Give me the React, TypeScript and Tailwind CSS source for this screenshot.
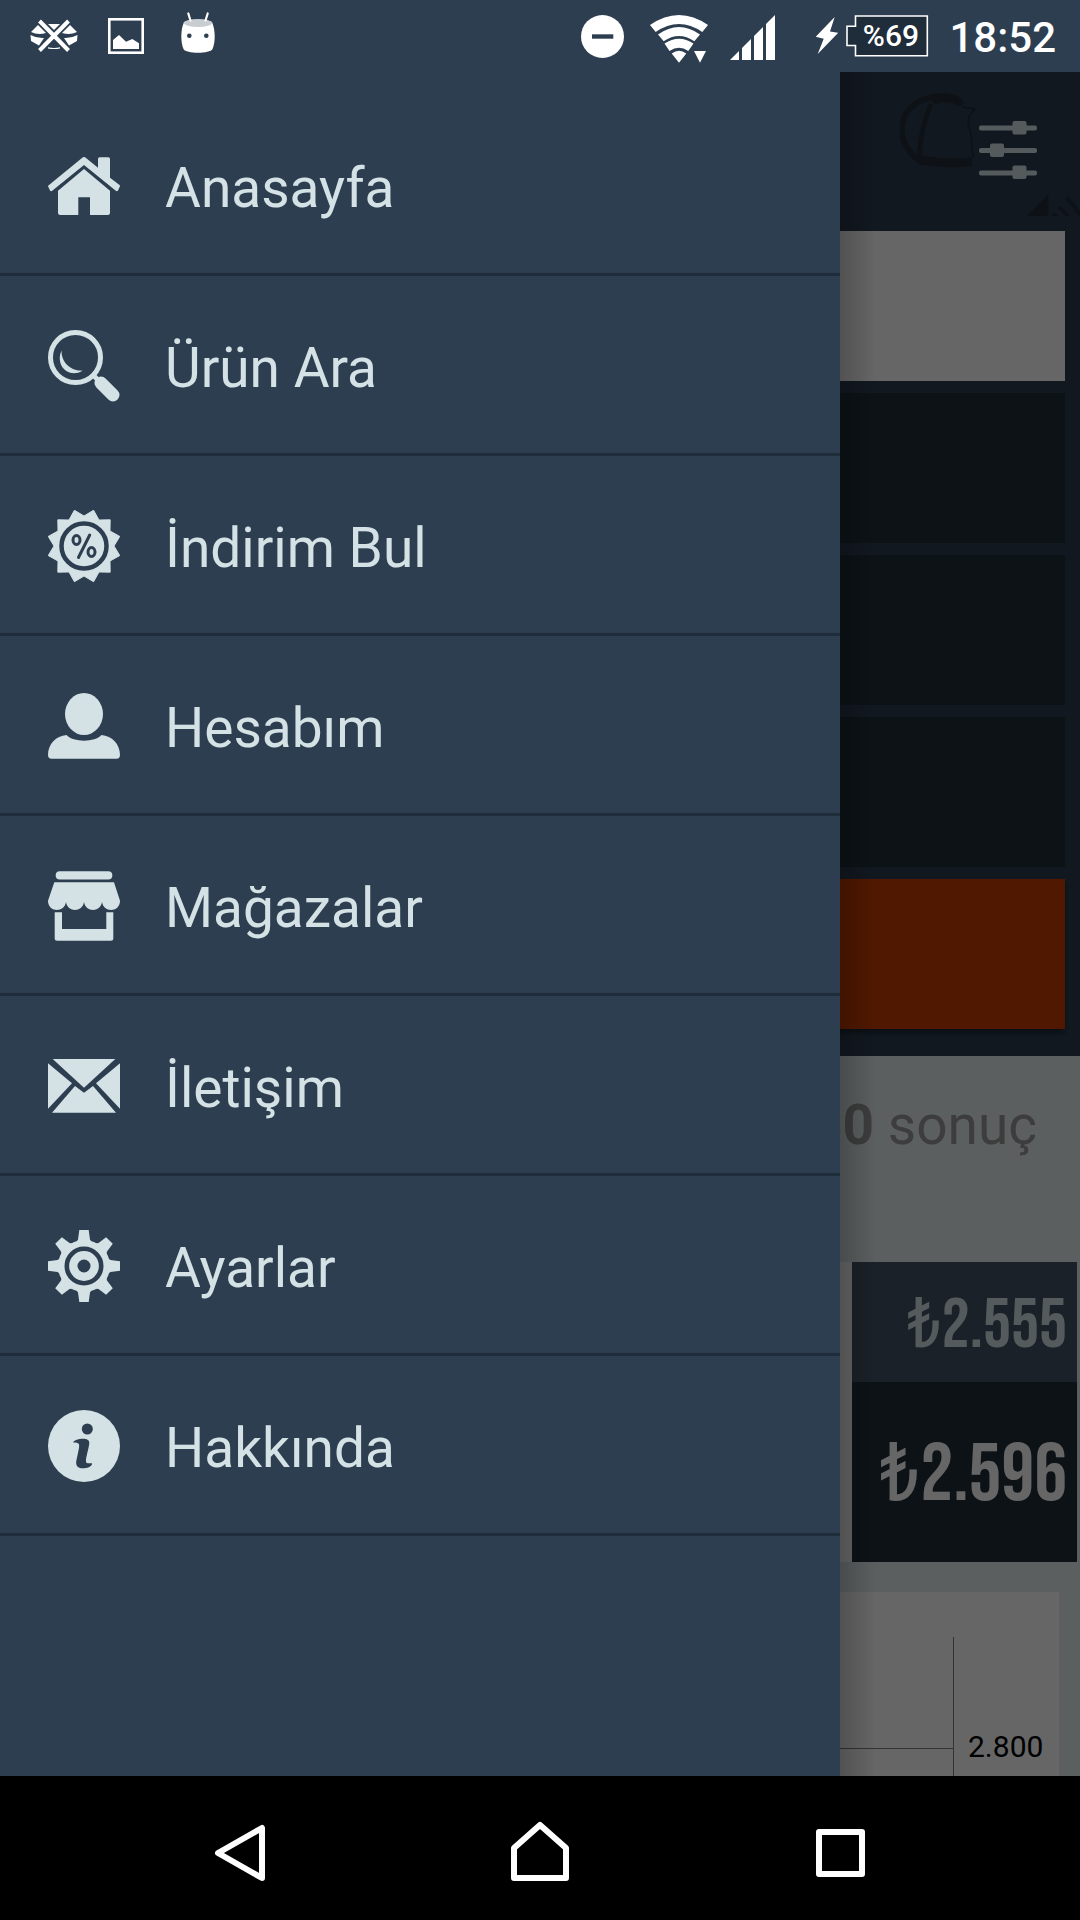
import React from 'react';

const starPoints = Array.from({ length: 24 }, (_, i) => {
    const angle = (i * Math.PI) / 12;
    const radius = i % 2 === 0 ? 30 : 37;
    return `${36 + radius * Math.sin(angle)},${36 - radius * Math.cos(angle)}`;
}).join(' ');

const toothAngles = [0, 45, 90, 135, 180, 225, 270, 315];

function HomeIcon() {
    return (
        <>
            <path d="M1 35 34 8Q36 6 38 8L50 17.7V9Q50 7.300 51.700 7.300H60.300Q62 7.300 62 9V27.700L71.500 35Q72.500 36 71.500 37.200L70 40.500Q69 42 67.500 40.500L36 15 4.500 40.500Q3 42 2 40.500L.5 37.200Q-.5 36 1 35Z" />
            <path d="M36 19 62 40.700V62.500Q62 65 59.500 65H42V47.300H30.300V65H12.500Q10 65 10 62.500V40.700Z" />
        </>
    );
}

function SearchIcon() {
    return (
        <>
            <circle cx="27.5" cy="27.5" r="25" fill="none" stroke="currentColor" strokeWidth="5" />
            <path d="M13.500 20.500C7 35 20 49 34.800 40.700C24 41 13.500 34 13.500 20.500Z" />
            <path d="M44 44 50 50" stroke="currentColor" strokeWidth="5" />
            <path d="M53 53 65 65" stroke="currentColor" strokeWidth="13" strokeLinecap="round" />
        </>
    );
}

function DiscountIcon() {
    return (
        <>
            <polygon points={starPoints} stroke="currentColor" strokeWidth="1" strokeLinejoin="round" />
            <g fill="none" className="stroke-[#2d3e50]">
                <circle cx="36" cy="36" r="22.500" strokeWidth="4.500" />
                <ellipse cx="28.500" cy="30" rx="3.500" ry="4.500" strokeWidth="3" />
                <ellipse cx="43.500" cy="42" rx="3.500" ry="4.500" strokeWidth="3" />
                <path d="M41.700 25 30.500 47.500" strokeWidth="3" strokeLinecap="round" />
            </g>
        </>
    );
}

function UserIcon() {
    return (
        <>
            <ellipse cx="36" cy="24" rx="19" ry="21" />
            <path d="M18.500 45C25 52.500 47 52.500 53.500 45C64 46 72 54 72 65Q72 68.700 68.500 68.700H3.500Q0 68.700 0 65C0 54 8 46 18.500 45Z" />
        </>
    );
}

function StoreIcon() {
    return (
        <>
            <rect x="7.700" y="1.300" width="56.600" height="8.200" rx="4.100" />
            <path d="M6.300 12.300H66L72 30.700C72 42.500 55.500 43 54 32C52.500 42.500 37.500 42.500 36 32C34.500 42.500 19.500 42.500 18 32C16.500 43 0 42.500 0 30.700Z" />
            <path d="M6.700 42.300H14V59H58.300V42.300H65.300V68.200Q65.300 70.700 62.800 70.700H9.200Q6.700 70.700 6.700 68.200Z" />
        </>
    );
}

function MailIcon() {
    return (
        <>
            <path d="M4.700 9H67.300L36 37.700Z" />
            <path d="M0 13.300 24 33.300 0 58.700Z" />
            <path d="M72 13.300 48 33.300 72 58.700Z" />
            <path d="M27 36 36 42.700 45 36 68 62.700H4Z" />
        </>
    );
}

function GearIcon() {
    return (
        <>
            <circle cx="36" cy="36" r="26" />
            {toothAngles.map((angle) => (
                <path key={angle} d="M31.300 0H40.700L42 9.500 45 14H27L30 9.500Z" transform={`rotate(${angle} 36 36)`} />
            ))}
            <circle cx="36" cy="36" r="17.200" fill="none" strokeWidth="4.600" className="stroke-[#2d3e50]" />
            <circle cx="36" cy="36" r="6.500" className="fill-[#2d3e50]" />
        </>
    );
}

function InfoIcon() {
    return (
        <>
            <circle cx="36" cy="36" r="36" />
            <g className="fill-[#2d3e50]">
                <circle cx="39.300" cy="19" r="5.500" />
                <path d="M25.200 32.500Q25 31 28 30C34 28 41.500 28 41.300 33C41 38 37.500 48 38 51.500C38.400 54.500 42 52.500 44.200 53.500C43.500 57 39 58.300 35 58.300C29 58.300 27.700 55 28.300 51L31 38C31.500 34 31.500 32.500 25.200 32.500Z" />
            </g>
        </>
    );
}

const menuItems = [
    { label: 'Anasayfa', Icon: HomeIcon },
    { label: 'Ürün Ara', Icon: SearchIcon },
    { label: 'İndirim Bul', Icon: DiscountIcon },
    { label: 'Hesabım', Icon: UserIcon },
    { label: 'Mağazalar', Icon: StoreIcon },
    { label: 'İletişim', Icon: MailIcon },
    { label: 'Ayarlar', Icon: GearIcon },
    { label: 'Hakkında', Icon: InfoIcon },
];

function StatusBar() {
    return (
        <div className="flex h-[72px] items-center justify-between bg-[#2d3e50] pl-[30px] pr-6 text-white">
            <div className="flex items-center gap-[30px]">
                <svg viewBox="30 0 48 72" className="h-[72px] w-12" fill="currentColor">
                    <path d="M48 24H60L54 30Z" />
                    <path d="M31 32 38 25 46 33Q38 35.500 31 32Z" />
                    <path d="M77 32 70 25 62 33Q70 35.500 77 32Z" />
                    <path d="M30.500 35Q37 38.500 44 38L39 45.500 31 41Z" />
                    <path d="M77.500 35Q71 38.500 64 38L69 45.500 77 41Z" />
                    <path d="M48 47.300Q54 48.500 60 47.300V48.500Q54 49.500 48 48.500Z" />
                    <path d="M39.500 21 68.500 50.500M68.500 21 39.500 50.500" stroke="currentColor" strokeWidth="4" />
                </svg>
                <svg viewBox="108 0 36 72" className="h-[72px] w-9" fill="currentColor">
                    <rect x="109.300" y="19.300" width="33.400" height="33.400" fill="none" stroke="currentColor" strokeWidth="2.600" />
                    <path d="M113 49V40L119 35 126 41.700 132.300 39 139 43.300V49Z" />
                </svg>
                <svg viewBox="174 0 42 72" className="h-[72px] w-[42px]" fill="currentColor">
                    <path d="M184 22C190 19 206 19 212 22C215.500 30 215.500 42 212.500 49C210 54 186 54 183.500 49C180.500 42 180.500 30 184 22Z" />
                    <ellipse cx="198" cy="23" rx="14" ry="4" className="fill-[#c8cdd2]" />
                    <path d="M188.300 13.500 190.500 20.500M207.700 13.500 205.500 20.500" stroke="currentColor" strokeWidth="2.200" strokeLinecap="round" />
                    <circle cx="189.300" cy="35.700" r="2.300" className="fill-[#2d3e50]" />
                    <circle cx="206.300" cy="35.700" r="2.300" className="fill-[#2d3e50]" />
                </svg>
            </div>

            <div className="flex items-center gap-[22px]">
                <svg viewBox="581 0 47 72" className="h-[72px] w-[47px]" fill="currentColor">
                    <circle cx="602.500" cy="36.500" r="21.500" />
                    <rect x="592" y="34.300" width="21.300" height="4.400" className="fill-[#2d3e50]" />
                </svg>
                <svg viewBox="650 0 58 72" className="h-[72px] w-[58px]" fill="currentColor">
                    <path d="M650 25Q679 5 708 25L702.300 32Q679 16 655.700 32Z" />
                    <path d="M658 34.500Q679 19.500 700 34.500L694.300 41.300Q679 30.500 663.700 41.300Z" />
                    <path d="M664.500 43.500Q679 34 693.500 43.500L688.300 51Q679 44.500 669.500 51Z" />
                    <path d="M671.700 53.500Q679 48 686.300 53.500L679 62.700Z" />
                    <path d="M694 51H706L700 62.700Z" />
                </svg>
                <svg viewBox="730 0 45 72" className="h-[72px] w-[45px]" fill="currentColor">
                    <path d="M730 60 739 51V60Z" />
                    <path d="M742 48 751 39V60H742Z" />
                    <path d="M754 36 763 27V60H754Z" />
                    <path d="M766 24 775 15V60H766Z" />
                </svg>
                <div className="flex items-center gap-2 pl-[18px]">
                    <svg viewBox="815 0 23 72" className="h-[72px] w-[23px]" fill="currentColor">
                        <path d="M834.700 17 815.700 36.700 823.700 38.700 817.700 54 838.300 32.700 830 31.500Z" />
                    </svg>
                    <div className="relative">
                        <svg viewBox="846 0 81 72" className="h-[72px] w-[81px] overflow-visible">
                            <path d="M855.500 16H927.300V55.700H855.500V45.500H847V26.300H855.500Z" stroke="currentColor" strokeWidth="1.600" className="fill-[#1f2c3a]" />
                        </svg>
                        <span className="absolute inset-0 pl-2 text-center text-[30px] leading-[72px] font-medium">%69</span>
                    </div>
                </div>
                <span className="pt-1 text-[42px] leading-[72px] font-medium">18:52</span>
            </div>
        </div>
    );
}

function ProductPage() {
    return (
        <div className="absolute inset-0 flex flex-col overflow-hidden bg-[#e4eeee]">
            {/* Search form */}
            <div className="bg-[#2d3e50] pb-[27px]">
                <header className="relative flex h-[156px] items-center justify-end pr-[43px]">
                    <svg viewBox="0 0 180 144" className="absolute top-0 right-0 h-36 w-[180px] fill-none stroke-[#232f3b]">
                        <path d="M21 90C-11 68-3 25 43 24Q55 24 62 33" strokeWidth="6" />
                        <path d="M32 29C40 24 54 25 60 31" strokeWidth="9" />
                        <path d="M31 32C24 48 20 66 19 86" strokeWidth="5" />
                        <path d="M62 35 75 37C65 46 68 52 71 62L73 86" strokeWidth="2" />
                        <path d="M19 88Q45 92 72 90" strokeWidth="9" />
                        <path d="M127 144 148 123V144Z" className="fill-[#232f3b]" strokeWidth="1" />
                        <path d="M153 142 158 145M159 135 168 144M166 126Q173 131 180 143" strokeWidth="4" />
                    </svg>
                    <button type="button" aria-label="Filtrele" className="relative text-[#d4e1e5]">
                        <svg viewBox="0 0 58 58" className="h-[58px] w-[58px]" fill="currentColor">
                            <rect x="0" y="4.500" width="58" height="5" rx="2" />
                            <rect x="0" y="27" width="58" height="5" rx="2" />
                            <rect x="0" y="49.500" width="58" height="5" rx="2" />
                            <rect x="33.500" y="0" width="14" height="13.500" rx="2" />
                            <rect x="11" y="22.500" width="14" height="13.500" rx="2" />
                            <rect x="33.500" y="44.500" width="14" height="13.500" rx="2" />
                        </svg>
                    </button>
                </header>
                <form className="flex flex-col gap-3 px-[15px] pt-[3px]">
                    <input type="text" aria-label="Ürün" className="h-[150px] w-full bg-white px-6 text-[55px]" />
                    <select aria-label="Kategori" className="h-[150px] w-full appearance-none bg-[#202d37]" />
                    <select aria-label="Marka" className="h-[150px] w-full appearance-none bg-[#202d37]" />
                    <select aria-label="Mağaza" className="h-[150px] w-full appearance-none bg-[#202d37]" />
                    <button type="button" aria-label="Ara" className="h-[150px] w-full bg-[#c73e00] shadow-[0_4px_6px_rgba(0,0,0,0.4)]" />
                </form>
            </div>

            {/* Results */}
            <p className="h-[206px] pt-[33px] pr-[43px] text-right text-[55px] leading-[72px] text-[#999]">
                <span className="font-bold">50</span> sonuç
            </p>
            <div className="flex bg-white">
                <div className="flex-1" />
                <div className="w-[225px] text-right font-['Bebas_Neue','Roboto_Condensed','Liberation_Sans_Narrow','Roboto',sans-serif]">
                    <div className="h-[120px] bg-[#445364] pt-1 pr-[10px] text-[70px] leading-[120px] text-[#d4e1e5]">₺2.555</div>
                    <div className="h-[180px] bg-[#202d37] pt-1 pr-[10px] text-[82px] leading-[180px] text-white">₺2.596</div>
                </div>
                <div className="w-[3px] bg-[#e4eeee]" />
            </div>

            {/* Price chart */}
            <div className="mx-[21px] mt-[30px] flex flex-1 bg-white">
                <div className="mt-[45px] flex-1 border-r border-[#808080] pt-[111px]">
                    <div className="border-t border-[#808080]" />
                </div>
                <div className="w-[105px] pt-[137px] pl-[14px] text-[30px] leading-9 text-black">2.800</div>
            </div>
        </div>
    );
}

function Drawer() {
    return (
        <nav className="absolute inset-y-0 left-0 w-7/9 bg-[#2d3e50] pt-6">
            <ul>
                {menuItems.map(({ label, Icon }) => (
                    <li key={label}>
                        <a
                            href="#"
                            className="flex h-[180px] items-center gap-[45px] pl-12 text-[55px] text-[#d4e1e5] shadow-[inset_0_-3px_0_#1f2c3a]"
                        >
                            <svg viewBox="0 0 72 72" className="h-[72px] w-[72px]" fill="currentColor">
                                <Icon />
                            </svg>
                            <span className="pt-1">{label}</span>
                        </a>
                    </li>
                ))}
            </ul>
            <div className="absolute inset-y-0 left-full w-9 bg-linear-to-r from-black/20 to-transparent" />
        </nav>
    );
}

function NavigationBar() {
    return (
        <div className="bg-black">
            <div className="mx-auto grid h-36 w-5/6 grid-cols-3 place-items-center text-white">
                <button type="button" aria-label="Geri">
                    <svg viewBox="0 0 72 72" className="h-[72px] w-[72px]" fill="none" stroke="currentColor" strokeWidth="6" strokeLinejoin="round">
                        <path d="M58 16V66L14 41Z" />
                    </svg>
                </button>
                <button type="button" aria-label="Ana ekran">
                    <svg viewBox="0 0 72 72" className="h-[72px] w-[72px]" fill="none" stroke="currentColor" strokeWidth="6" strokeLinejoin="round">
                        <path d="M36 13 10 36V66H62V36Z" />
                    </svg>
                </button>
                <button type="button" aria-label="Son uygulamalar">
                    <svg viewBox="0 0 72 72" className="h-[72px] w-[72px]" fill="none" stroke="currentColor" strokeWidth="6" strokeLinejoin="round">
                        <path d="M15 20H58V62H15Z" />
                    </svg>
                </button>
            </div>
        </div>
    );
}

const App = () => {
    return (
        <div className="flex min-h-screen flex-col font-['Roboto',sans-serif]">
            <StatusBar />
            <main className="relative flex-1 overflow-hidden">
                <ProductPage />
                <div className="absolute inset-0 bg-black/60" />
                <Drawer />
            </main>
            <NavigationBar />
        </div>
    );
};

export default App;
